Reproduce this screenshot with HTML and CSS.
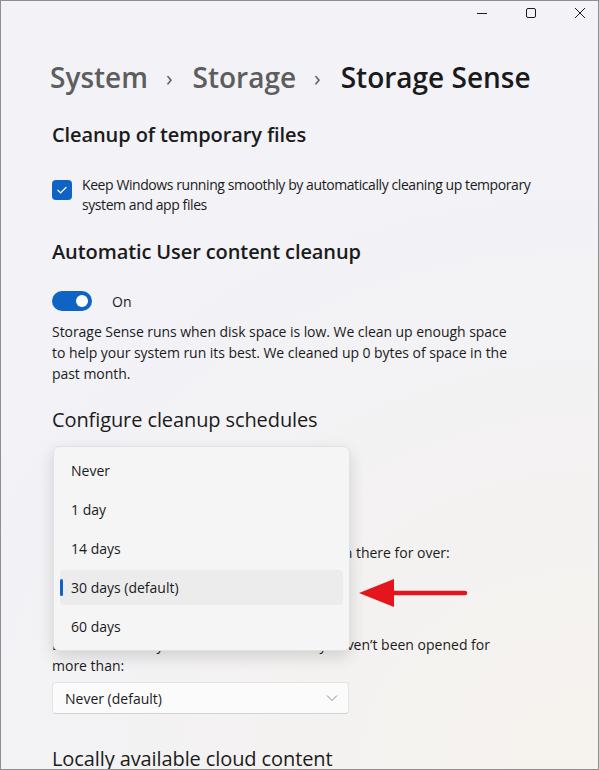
FILE: index.html
```html
<!DOCTYPE html>
<html>
<head>
<meta charset="utf-8">
<link rel="stylesheet" href="styles.css">
</head>
<body>
<div class="window">
  <div class="titlebar">
    <span class="ctl"><svg width="12" height="12" viewBox="0 0 12 12"><path d="M1 6.5h10" stroke="#1b1b1b" stroke-width="1"/></svg></span>
    <span class="ctl"><svg width="12" height="12" viewBox="0 0 12 12"><rect x="1.5" y="1.5" width="9" height="9" rx="1.5" fill="none" stroke="#1b1b1b" stroke-width="1"/></svg></span>
    <span class="ctl"><svg width="12" height="12" viewBox="0 0 12 12"><path d="M1 1l10 10M11 1L1 11" stroke="#1b1b1b" stroke-width="1"/></svg></span>
  </div>
  <div class="content">
    <h1 class="crumbs"><span class="crumb">System</span><span class="sep">›</span><span class="crumb">Storage</span><span class="sep">›</span><span class="current">Storage Sense</span></h1>

    <h2 class="section">Cleanup of temporary files</h2>
    <div class="check-row">
      <span class="checkbox"><svg width="12" height="12" viewBox="0 0 12 12"><path d="M2 6.3l2.6 2.6L10 3.5" fill="none" stroke="#fff" stroke-width="1.3" stroke-linecap="round" stroke-linejoin="round"/></svg></span>
      <span class="check-text">Keep Windows running smoothly by automatically cleaning up temporary system and app files</span>
    </div>

    <h2 class="section second">Automatic User content cleanup</h2>
    <div class="toggle-row">
      <span class="toggle"><span class="knob"></span></span>
      <span class="toggle-label">On</span>
    </div>
    <p class="desc">Storage Sense runs when disk space is low. We clean up enough space to help your system run its best. We cleaned up 0 bytes of space in the past month.</p>

    <h3 class="sub">Configure cleanup schedules</h3>
    <div class="hidden-block"></div>
    <p class="label recycle">Delete files in my recycle bin if they have been there for over:</p>
    <div class="select-space"></div>
    <p class="label downloads">Delete files in my Downloads folder if they haven’t been opened for more than:</p>
    <div class="select"><span>Never (default)</span><span class="chev"><svg width="12" height="8" viewBox="0 0 12 8"><path d="M1 1.5l5 5 5-5" fill="none" stroke="#8a8a8a" stroke-width="1"/></svg></span></div>

    <h3 class="sub cloud">Locally available cloud content</h3>
  </div>

  <div class="menu">
    <div class="item">Never</div>
    <div class="item">1 day</div>
    <div class="item">14 days</div>
    <div class="item selected">30 days (default)</div>
    <div class="item">60 days</div>
  </div>

  <svg class="arrow" width="112" height="32" viewBox="0 0 112 32"><path d="M1 16L36 2v28z" fill="#e5151d"/><path d="M34 16H107" stroke="#e5151d" stroke-width="4.5" stroke-linecap="round"/></svg>
</div>
</body>
</html>
```
FILE: styles.css
```css
* { box-sizing: border-box; }
html, body { margin: 0; padding: 0; }
body {
  width: 599px;
  height: 770px;
  overflow: hidden;
  font-family: "Open Sans", "Noto Sans", sans-serif;
  color: #1b1b1b;
}
.window {
  position: relative;
  width: 599px;
  height: 770px;
  overflow: hidden;
  border: 1px solid #8f8f8f;
  background: radial-gradient(ellipse 700px 600px at 100% 100%, #f6f3ee 0%, #f4f2f1 45%, #f2f2f7 100%);
}
.titlebar {
  display: flex;
  justify-content: flex-end;
  height: 26px;
  padding-top: 6px;
  padding-right: 11px;
  gap: 35px;
}
.ctl { width: 14px; height: 12px; display: flex; align-items: center; justify-content: center; }
.content {
  padding-left: 51px;
}
.crumbs {
  margin: 31px 0 0 -2px;
  height: 38px;
  font-size: 28px;
  line-height: 38px;
  font-weight: 600;
  display: flex;
  align-items: center;
}
.crumb { color: #5d5d5d; }
.sep { color: #5d5d5d; font-weight: 400; font-size: 22px; margin: 0 20px 0 18px; }
.current { color: #1a1a1a; }
.section {
  margin: 25px 0 0 0;
  font-size: 20px;
  line-height: 28px;
  font-weight: 600;
  letter-spacing: -0.1px;
}
.section.second { margin-top: 23px; }
.check-row {
  display: flex;
  align-items: flex-start;
  margin-top: 26px;
}
.checkbox {
  width: 20px; height: 20px;
  border-radius: 4px;
  background: #0f63c4;
  display: flex; align-items: center; justify-content: center;
  margin-top: 5px;
  flex: none;
}
.check-text {
  margin-left: 10px;
  font-size: 14px;
  line-height: 20px;
  width: 470px;
  letter-spacing: -0.42px;
}
.toggle-row {
  display: flex;
  align-items: center;
  margin-top: 25px;
  height: 20px;
}
.toggle {
  width: 40px; height: 20px;
  border-radius: 10px;
  background: #0f63c4;
  position: relative;
  display: flex; align-items: center; justify-content: flex-end;
  padding-right: 4px;
}
.knob { width: 12px; height: 12px; border-radius: 50%; background: #fff; }
.toggle-label { margin-left: 20px; font-size: 14px; }
.desc {
  margin: 10px 0 0 0;
  font-size: 14px;
  line-height: 21px;
  width: 470px;
  letter-spacing: -0.05px;
}
.sub {
  margin: 22px 0 0 0;
  font-size: 20px;
  line-height: 28px;
  font-weight: 400;
  letter-spacing: -0.1px;
}
.hidden-block { height: 81px; margin-top: 27px; }
.label {
  margin: 0;
  font-size: 14px;
  line-height: 21px;
  width: 450px;
  letter-spacing: 0;
}
.label.recycle { margin-top: 0; }
.select-space { height: 32px; margin-top: 7px; }
.label.downloads { margin-top: 32px; }
.select {
  margin-top: 6px;
  width: 297px;
  height: 32px;
  background: #fbfbfb;
  border: 1px solid #e3e3e3;
  border-bottom-color: #d2d2d2;
  border-radius: 4px;
  display: flex;
  align-items: center;
  justify-content: space-between;
  padding: 0 10px 0 12px;
  font-size: 14px;
}
.chev { display: flex; align-items: center; }
.sub.cloud { margin-top: 31px; }

.menu {
  position: absolute;
  left: 52px;
  top: 445px;
  width: 297px;
  height: 205px;
  background: #f5f5f6;
  border: 1px solid #e2e2e2;
  border-radius: 6px;
  box-shadow: 0 6px 16px rgba(0,0,0,0.14);
  padding: 6px 6px 0 6px;
  display: flex;
  flex-direction: column;
  gap: 4px;
}
.item {
  position: relative;
  height: 35px;
  line-height: 35px;
  padding-left: 11px;
  font-size: 14px;
  border-radius: 4px;
}
.item.selected { background: #ececed; }
.item.selected::before {
  content: "";
  position: absolute;
  left: 0; top: 9px;
  width: 3px; height: 17px;
  border-radius: 2px;
  background: #0f63c4;
}
.arrow {
  position: absolute;
  left: 357px;
  top: 576px;
}
```
